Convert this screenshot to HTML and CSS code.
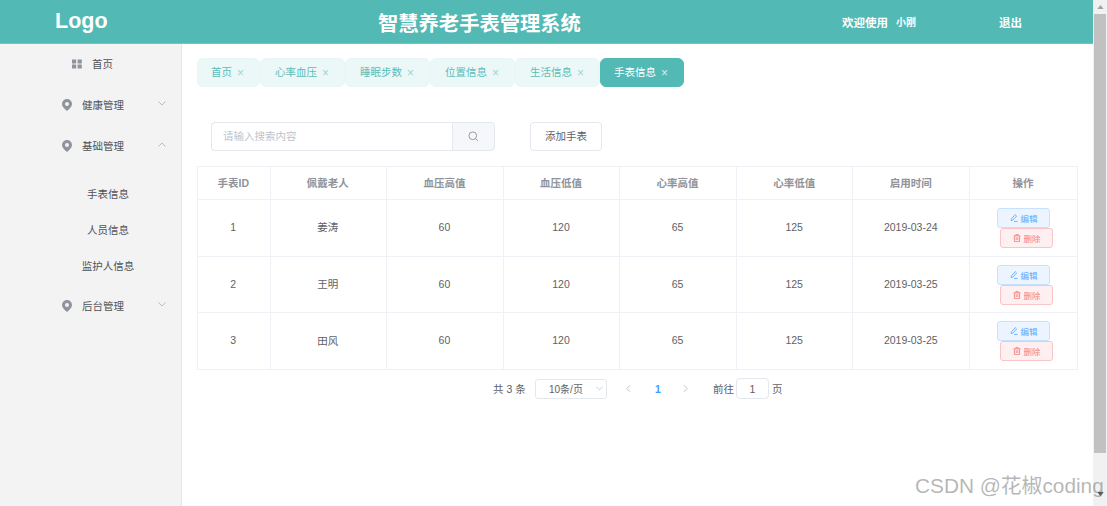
FILE: index.html
```html
<!DOCTYPE html>
<html lang="zh">
<head>
<meta charset="utf-8">
<title>智慧养老手表管理系统</title>
<link rel="stylesheet" href="styles.css">
</head>
<body>
<div class="page">
  <div class="app">
    <header class="header">
      <div class="logo">Logo</div>
      <h1 class="title">智慧养老手表管理系统</h1>
      <div class="welcome"><span>欢迎使用</span><span class="user">小刚</span></div>
      <div class="logout">退出</div>
    </header>
    <div class="body">
      <nav class="sidebar">
        <div class="menu-item home">
          <svg class="icon-grid" viewBox="0 0 10 10" width="10" height="10"><path fill="#8f939c" d="M0 .5h4.200v4H0zM5.600.5h4.200v4H5.600zM0 5.600h4.200v4H0zM5.600 5.600h4.200v4H5.600z"/></svg>
          <span>首页</span>
        </div>
        <div class="menu-item group">
          <svg class="icon-pin" viewBox="0 0 10 12" width="10" height="12"><path fill="#8f939c" fill-rule="evenodd" d="M5 0a5 5 0 0 1 5 5c0 2.600-2.700 5.200-5 7C2.700 10.200 0 7.600 0 5a5 5 0 0 1 5-5zm0 3a2 2 0 1 0 0 4 2 2 0 0 0 0-4z"/></svg>
          <span class="label">健康管理</span>
          <svg class="chevron" viewBox="0 0 8 5" width="8" height="5"><path fill="none" stroke="#a9adb5" stroke-width=".8" d="M.5.5 4 4 7.500.5"/></svg>
        </div>
        <div class="menu-item group">
          <svg class="icon-pin" viewBox="0 0 10 12" width="10" height="12"><path fill="#8f939c" fill-rule="evenodd" d="M5 0a5 5 0 0 1 5 5c0 2.600-2.700 5.200-5 7C2.700 10.200 0 7.600 0 5a5 5 0 0 1 5-5zm0 3a2 2 0 1 0 0 4 2 2 0 0 0 0-4z"/></svg>
          <span class="label">基础管理</span>
          <svg class="chevron" viewBox="0 0 8 5" width="8" height="5"><path fill="none" stroke="#a9adb5" stroke-width=".8" d="M.5 4.500 4 1l3.500 3.500"/></svg>
        </div>
        <div class="submenu">
          <div class="sub-item">手表信息</div>
          <div class="sub-item">人员信息</div>
          <div class="sub-item">监护人信息</div>
        </div>
        <div class="menu-item group">
          <svg class="icon-pin" viewBox="0 0 10 12" width="10" height="12"><path fill="#8f939c" fill-rule="evenodd" d="M5 0a5 5 0 0 1 5 5c0 2.600-2.700 5.200-5 7C2.700 10.200 0 7.600 0 5a5 5 0 0 1 5-5zm0 3a2 2 0 1 0 0 4 2 2 0 0 0 0-4z"/></svg>
          <span class="label">后台管理</span>
          <svg class="chevron" viewBox="0 0 8 5" width="8" height="5"><path fill="none" stroke="#a9adb5" stroke-width=".8" d="M.5.5 4 4 7.500.5"/></svg>
        </div>
      </nav>
      <main class="main">
        <div class="tabs">
          <div class="tab tab-short">首页<span class="close">×</span></div>
          <div class="tab">心率血压<span class="close">×</span></div>
          <div class="tab">睡眠步数<span class="close">×</span></div>
          <div class="tab">位置信息<span class="close">×</span></div>
          <div class="tab">生活信息<span class="close">×</span></div>
          <div class="tab active">手表信息<span class="close">×</span></div>
        </div>
        <div class="toolbar">
          <div class="search">
            <div class="search-input">请输入搜索内容</div>
            <div class="search-btn">
              <svg viewBox="0 0 12 12" width="11" height="11"><circle cx="5.200" cy="5.200" r="4.200" fill="none" stroke="#909399" stroke-width="1"/><path stroke="#909399" stroke-width="1" d="M8.300 8.300 11 11"/></svg>
            </div>
          </div>
          <div class="add-btn">添加手表</div>
        </div>
        <table class="grid">
          <colgroup>
            <col class="c1"><col class="c2"><col class="c2"><col class="c2"><col class="c2"><col class="c2"><col class="c2"><col class="c8">
          </colgroup>
          <thead>
            <tr><th>手表ID</th><th>佩戴老人</th><th>血压高值</th><th>血压低值</th><th>心率高值</th><th>心率低值</th><th>启用时间</th><th>操作</th></tr>
          </thead>
          <tbody>
            <tr>
              <td>1</td><td>姜涛</td><td>60</td><td>120</td><td>65</td><td>125</td><td>2019-03-24</td>
              <td class="op-cell"><div class="ops">
                <div class="op edit"><svg viewBox="0 0 10 10" width="8" height="8"><path fill="none" stroke="#409eff" stroke-width=".9" d="M6.500.8 8.300 2.500 3.500 7.600 1.300 8.200 1.800 6zM5 9.300h4.500"/></svg>编辑</div>
                <div class="op del"><svg viewBox="0 0 10 10" width="8" height="8"><path fill="none" stroke="#f56c6c" stroke-width=".9" d="M.8 2.300h8.400M3.500 2.300V.8h3v1.500M1.800 2.300v7h6.400v-7M4 4v3.500M6 4v3.500"/></svg>删除</div>
              </div></td>
            </tr>
            <tr>
              <td>2</td><td>王明</td><td>60</td><td>120</td><td>65</td><td>125</td><td>2019-03-25</td>
              <td class="op-cell"><div class="ops">
                <div class="op edit"><svg viewBox="0 0 10 10" width="8" height="8"><path fill="none" stroke="#409eff" stroke-width=".9" d="M6.500.8 8.300 2.500 3.500 7.600 1.300 8.200 1.800 6zM5 9.300h4.500"/></svg>编辑</div>
                <div class="op del"><svg viewBox="0 0 10 10" width="8" height="8"><path fill="none" stroke="#f56c6c" stroke-width=".9" d="M.8 2.300h8.400M3.500 2.300V.8h3v1.500M1.800 2.300v7h6.400v-7M4 4v3.500M6 4v3.500"/></svg>删除</div>
              </div></td>
            </tr>
            <tr>
              <td>3</td><td>田风</td><td>60</td><td>120</td><td>65</td><td>125</td><td>2019-03-25</td>
              <td class="op-cell"><div class="ops">
                <div class="op edit"><svg viewBox="0 0 10 10" width="8" height="8"><path fill="none" stroke="#409eff" stroke-width=".9" d="M6.500.8 8.300 2.500 3.500 7.600 1.300 8.200 1.800 6zM5 9.300h4.500"/></svg>编辑</div>
                <div class="op del"><svg viewBox="0 0 10 10" width="8" height="8"><path fill="none" stroke="#f56c6c" stroke-width=".9" d="M.8 2.300h8.400M3.500 2.300V.8h3v1.500M1.800 2.300v7h6.400v-7M4 4v3.500M6 4v3.500"/></svg>删除</div>
              </div></td>
            </tr>
          </tbody>
        </table>
        <div class="pager">
          <span class="total">共 3 条</span>
          <div class="size">10条/页<svg viewBox="0 0 8 5" width="7" height="5"><path fill="none" stroke="#b4b8c0" stroke-width=".8" d="M.5.500 4 4 7.500.5"/></svg></div>
          <svg class="arrow prev" viewBox="0 0 6 10" width="5" height="9"><path fill="none" stroke="#b4b8c0" stroke-width="1" d="M5 1 1 5l4 4"/></svg>
          <span class="page-num">1</span>
          <svg class="arrow next" viewBox="0 0 6 10" width="5" height="9"><path fill="none" stroke="#b4b8c0" stroke-width="1" d="M1 1l4 4-4 4"/></svg>
          <span class="goto">前往</span>
          <div class="jump">1</div>
          <span class="unit">页</span>
        </div>
      </main>
    </div>
  </div>
  <div class="scrollbar">
    <svg viewBox="0 0 8 5" width="7" height="4"><path fill="#a3a3a3" d="M4 0l4 5H0z"/></svg>
    <div class="thumb"></div>
    <svg class="down" viewBox="0 0 8 5" width="7" height="4"><path fill="#505050" d="M4 5 8 0H0z"/></svg>
  </div>
</div>
<div class="watermark">CSDN @花椒coding</div>
</body>
</html>
```
FILE: styles.css
```css
* { box-sizing: border-box; }
html, body { margin: 0; height: 100%; overflow: hidden; background: #fff; }
body {
  font-family: "Liberation Sans", "Noto Sans CJK SC", sans-serif;
  font-size: 10.5px;
  color: #606266;
}
.page { display: flex; height: 506px; }
.app { flex: 1; min-width: 0; display: flex; flex-direction: column; }

.header {
  height: 44px;
  background: #52b9b5;
  border-bottom: 1px solid #6cc6c2;
  display: flex;
  align-items: center;
  color: #fff;
  flex: none;
}
.logo { font-size: 21.500px; font-weight: 700; margin-left: 55px; width: 323px; }
.title { font-size: 20.300px; font-weight: 700; margin: 0; width: 464px; white-space: nowrap; }
.welcome { width: 157px; display: flex; align-items: center; gap: 8px; font-weight: 700; font-size: 11.500px; }
.user { font-size: 10px; }
.logout { font-size: 11.500px; font-weight: 700; }

.body { flex: 1; display: flex; min-height: 0; }
.sidebar { width: 182px; flex: none; background: #f3f3f3; border-right: 1px solid #e6e6e6; color: #505257; }
.menu-item { height: 41px; display: flex; align-items: center; position: relative; }
.home { height: 40px; padding: 0 0 1px 72px; gap: 10px; }
.group { padding-left: 62px; }
.group .label { margin: 0 0 1px 10px; }
.chevron { position: absolute; left: 158px; top: 17px; }
.submenu { padding: 9px 0 2px; }
.sub-item { height: 36px; display: flex; align-items: center; justify-content: center; padding-left: 35px; }

.main { flex: 1; min-width: 0; padding: 14px 15px 0; }
.tabs { display: flex; height: 29px; }
.tab {
  width: 85px;
  background: #ecf8f8;
  border: 1px solid #e8f6f6;
  border-radius: 6px;
  color: #5abdb9;
  display: flex;
  align-items: center;
  padding: 0 0 2px 14px;
}
.tab-short { width: 63px; padding-left: 13px; }
.tab .close { margin: 2px 0 0 5px; font-size: 12px; color: #9cd6d3; line-height: 12px; }
.tab.active { background: #52b9b5; border-color: #52b9b5; color: #fff; width: 84px; padding-left: 13px; }
.tab.active .close { color: #d5efee; }

.toolbar { display: flex; margin: 35px 0 15px 14px; height: 29px; }
.search { display: flex; width: 284px; }
.search-input {
  flex: 1;
  border: 1px solid #e4e7ed;
  border-right: 0;
  border-radius: 4px 0 0 4px;
  color: #c0c4cc;
  display: flex;
  align-items: center;
  padding: 0 0 2px 11px;
}
.search-btn {
  width: 43px;
  background: #f5f7fa;
  border: 1px solid #e4e7ed;
  border-radius: 0 4px 4px 0;
  display: flex;
  align-items: center;
  justify-content: center;
}
.add-btn {
  margin-left: 35px;
  width: 72px;
  border: 1px solid #e4e7ed;
  border-radius: 4px;
  display: flex;
  align-items: center;
  justify-content: center;
  padding-bottom: 2px;
}

.grid { width: 880px; border-collapse: collapse; table-layout: fixed; text-align: center; }
.grid th, .grid td { border: 1px solid #f0f1f6; padding: 0 1px 2px 0; }
.grid th { height: 33px; color: #909399; font-weight: 700; }
.grid td { height: 56.700px; }
.grid td.op-cell { padding: 0; }
.c1 { width: 72.500px; }
.c2 { width: 116.600px; }
.c8 { width: 108px; }
.ops { display: flex; flex-direction: column; align-items: center; }
.op {
  width: 53px;
  height: 20px;
  border: 1px solid;
  border-radius: 3px;
  font-size: 8.500px;
  display: flex;
  align-items: center;
  justify-content: center;
  gap: 3px;
}
.edit { background: #ecf5ff; border-color: #c6e2ff; color: #5aa9ff; }
.del { background: #fef0f0; border-color: #fbc4c4; color: #f67e7e; margin-left: 6px; }

.pager { display: flex; align-items: center; margin-top: 8px; height: 21px; padding-left: 296px; }
.total { width: 42px; padding-bottom: 1px; }
.size {
  width: 72px;
  height: 20px;
  border: 1px solid #e4e7ed;
  border-radius: 3px;
  display: flex;
  align-items: center;
  justify-content: space-between;
  padding: 0 3px 1px 13px;
  font-size: 10px;
}
.arrow.prev { margin-left: 19px; }
.page-num { margin-left: 24px; width: 6px; color: #409eff; font-weight: 700; }
.arrow.next { margin-left: 22px; }
.goto { margin-left: 25px; padding-bottom: 1px; }
.jump {
  margin-left: 2px;
  width: 33px;
  height: 21px;
  border: 1px solid #e4e7ed;
  border-radius: 4px;
  display: flex;
  align-items: center;
  justify-content: center;
}
.unit { margin-left: 3px; padding-bottom: 1px; }

.scrollbar {
  width: 14px;
  flex: none;
  background: #f1f1f1;
  display: flex;
  flex-direction: column;
  align-items: center;
  padding-top: 5px;
}
.thumb { width: 12px; height: 439px; margin-top: 5px; background: #c1c1c1; }
.down { margin-top: 39px; }

.watermark {
  position: absolute;
  left: 915px;
  top: 473px;
  font-size: 20.800px;
  line-height: 26px;
  color: rgba(110, 110, 110, .5);
  white-space: nowrap;
}
```
